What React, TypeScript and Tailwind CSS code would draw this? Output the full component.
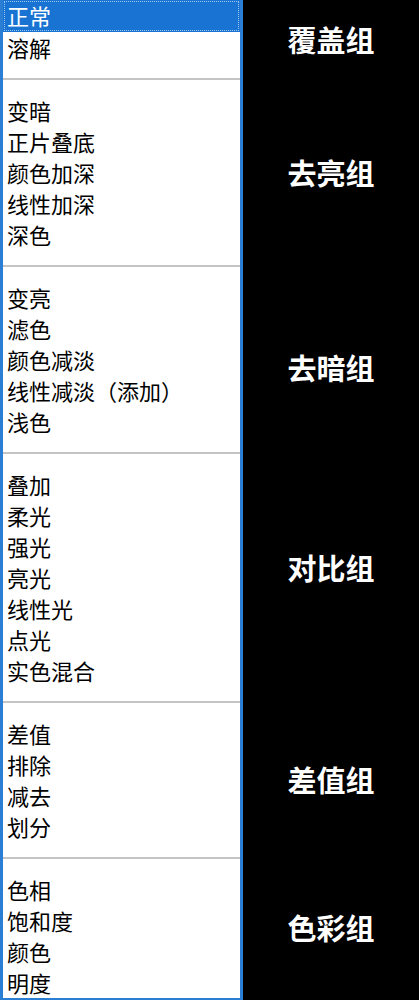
import * as React from 'react';

type BlendGroup = {
    label: string;
    modes: string[];
    labelClass?: string;
};

const groups: BlendGroup[] = [
    { label: '覆盖组', modes: ['正常', '溶解'], labelClass: 'pt-0.5' },
    { label: '去亮组', modes: ['变暗', '正片叠底', '颜色加深', '线性加深', '深色'] },
    { label: '去暗组', modes: ['变亮', '滤色', '颜色减淡', '线性减淡（添加）', '浅色'], labelClass: 'pt-4' },
    { label: '对比组', modes: ['叠加', '柔光', '强光', '亮光', '线性光', '点光', '实色混合'], labelClass: 'pb-5' },
    { label: '差值组', modes: ['差值', '排除', '减去', '划分'] },
    { label: '色彩组', modes: ['色相', '饱和度', '颜色', '明度'], labelClass: 'pb-1' },
];

const cjk = { fontFamily: '"Noto Sans CJK SC", "Noto Sans", sans-serif' };

export default function App() {
    const selected = '正常';

    return (
        <div className="w-[419px] h-[1000px] overflow-hidden bg-black" style={cjk}>
            <div className="grid grid-cols-[243px_1fr]">
                {groups.map((group, gi) => {
                    const first = gi === 0;
                    const last = gi === groups.length - 1;
                    return (
                        <React.Fragment key={group.label}>
                            {/* list column: blue frame, gray rule between groups */}
                            <div
                                className={
                                    'bg-white border-x-[3px] border-[#2a7fd5] ' +
                                    (last ? 'border-b-[3px] pt-[15px] pb-0' : 'pb-[15px] ') +
                                    (first ? 'pt-0' : last ? '' : 'pt-[15px]')
                                }
                            >
                                {group.modes.map((mode) => (
                                    <div
                                        key={mode}
                                        className={
                                            mode === selected
                                                ? 'h-[32px] leading-[31px] pl-[4px] text-[22px] bg-[#1873d3] text-white outline-1 outline-dotted outline-[#9cc8f0] -outline-offset-2'
                                                : 'h-[31px] leading-[31px] pl-[4px] text-[22px] text-black'
                                        }
                                    >
                                        {mode}
                                    </div>
                                ))}
                            </div>
                            <div className={'flex items-center justify-center text-white font-bold text-[29px] ' + (group.labelClass ?? '')}>
                                {group.label}
                            </div>
                            {!last && (
                                <>
                                    <div className="h-[2px] border-x-[3px] border-[#2a7fd5] bg-white">
                                        <div className="h-[2px] bg-[#c4c4c4]" />
                                    </div>
                                    <div />
                                </>
                            )}
                        </React.Fragment>
                    );
                })}
            </div>
        </div>
    );
}
